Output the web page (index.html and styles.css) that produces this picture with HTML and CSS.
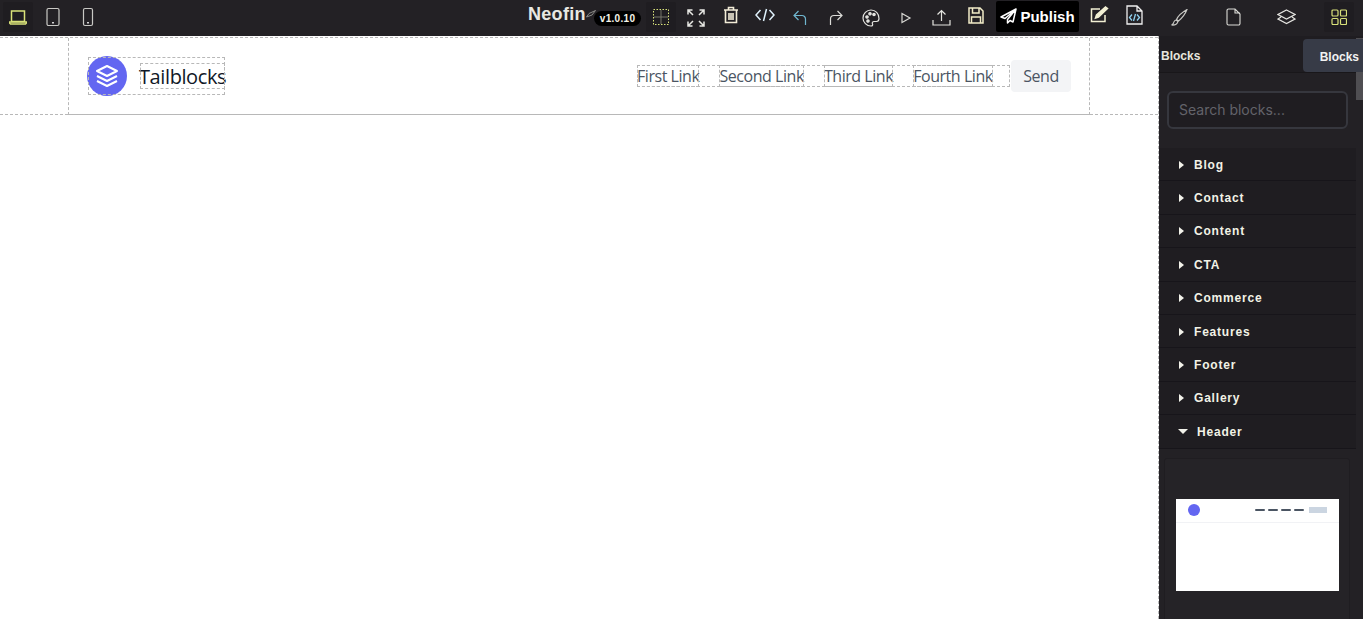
FILE: index.html
```html
<!DOCTYPE html>
<html lang="en">
<head>
	<meta charset="UTF-8">
	<title>Neofin</title>
	<link rel="stylesheet" href="styles.css">
</head>
<body>
	<div class="topbar">
		<div class="devices">
			<span class="tool tool-on"><svg width="18" height="15" viewBox="0 0 18 15" fill="none" stroke="#d9e27a" stroke-width="1.500"><path d="M2.500 1h13v10.500h-13z"/><path d="M0.500 12h17v1l-1 1H1.500l-1-1z"/></svg></span>
			<span class="tool"><svg width="16" height="20" viewBox="0 0 16 20" fill="none" stroke="#c9c9c5" stroke-width="1.200"><rect x="2" y="1.500" width="12" height="17" rx="1.500"/><path d="M8 15v1.600" stroke="#fff" stroke-width="1.600"/></svg></span>
			<span class="tool"><svg width="14" height="20" viewBox="0 0 14 20" fill="none" stroke="#c9c9c5" stroke-width="1.200"><rect x="2.500" y="1.500" width="9" height="17" rx="1.500"/><path d="M7 15v1.600" stroke="#fff" stroke-width="1.600"/></svg></span>
		</div>
		<div class="actions">
			<div class="brand"><span class="brand-name">Neofin</span><svg class="brand-mark" width="10" height="8" viewBox="0 0 10 8" fill="none" stroke="#8b8b88"><path d="M0.500 7 3 3.500 9.500 0.500 6 5z"/></svg><span class="version">v1.0.10</span></div>
			<span class="tool tool-on tool-grid"><svg width="16" height="16" viewBox="0 0 16 16" fill="none"><rect x="0.500" y="0.500" width="15" height="15" stroke="#d9e27a" stroke-dasharray="1.500 1.500"/><path d="M8 1v14M1 8h14" stroke="#77776a"/></svg></span>
			<span class="tool tool-a"><svg width="18" height="18" viewBox="0 0 18 18" fill="none" stroke="#e8e8e4" stroke-width="1.500"><path d="M1 5.500V1h4.500M1 1l5 5M17 5.500V1h-4.500M17 1l-5 5M1 12.500V17h4.500M1 17l5-5M17 12.500V17h-4.500M17 17l-5-5"/></svg></span>
			<span class="tool tool-b"><svg width="16" height="18" viewBox="0 0 16 18" fill="none" stroke="#f2ecd8" stroke-width="1.600"><path d="M1 4h14M5.500 4V1.500h5V4M2.500 4v12.500h11V4M6 7v7M8 7v7M10 7v7"/></svg></span>
			<span class="tool tool-c"><svg width="20" height="14" viewBox="0 0 20 14" fill="none" stroke="#dff1fb" stroke-width="1.500"><path d="M5.500 2 1 7l4.500 5M14.500 2 19 7l-4.500 5M11.500 1 8.500 13"/></svg></span>
			<span class="tool tool-d"><svg width="14" height="16" viewBox="0 0 14 16" fill="none" stroke="#6fb6cf" stroke-width="1.200"><path d="M5.500 1 1 5.500 5.500 10M1 5.500h8a3.500 3.500 0 0 1 3.500 3.500v6"/></svg></span>
			<span class="tool tool-e"><svg width="14" height="16" viewBox="0 0 14 16" fill="none" stroke="#dcdcd8" stroke-width="1.200"><path d="M8.500 1 13 5.500 8.500 10M13 5.500H5A3.500 3.500 0 0 0 1.500 9v6"/></svg></span>
			<span class="tool tool-f"><svg width="18" height="18" viewBox="0 0 18 18" fill="none" stroke="#e4e4e0" stroke-width="1.200"><path d="M9 1a8 8 0 1 0 0 16c1.500 0 2-1 1.500-2-.7-1.400.2-2.500 1.500-2.500h2.500c1.500 0 2.500-1.200 2.500-3C17 4.500 13.500 1 9 1z"/><circle cx="5" cy="8" r="1.200" fill="#e4e4e0"/><circle cx="8" cy="4.800" r="1.200" fill="#e4e4e0"/><circle cx="12" cy="5.500" r="1.200" fill="#e4e4e0"/><circle cx="6" cy="12" r="1.200" fill="#e4e4e0"/></svg></span>
			<span class="tool tool-g"><svg width="12" height="12" viewBox="0 0 12 12" fill="none" stroke="#d8d8d4" stroke-width="1.200"><path d="M2 1.500v9l8-4.500z"/></svg></span>
			<span class="tool tool-h"><svg width="19" height="18" viewBox="0 0 19 18" fill="none" stroke="#e4e4e0" stroke-width="1.200"><path d="M9.500 12V1.500M5.500 5.500l4-4 4 4M1 11v5h17v-5"/></svg></span>
			<span class="tool tool-i"><svg width="16" height="17" viewBox="0 0 16 17" fill="none" stroke="#f2ecc8" stroke-width="1.500"><path d="M1 1h11l3 3v12H1zM4.500 1v5h6.500V1M3.500 16v-6h9v6"/></svg></span>
			<button class="publish"><svg width="17" height="16" viewBox="0 0 17 16" fill="none" stroke="#fff" stroke-width="1.500" stroke-linejoin="round"><path d="M16 1 1 9l4 1.500L16 1 7.500 11.500V15l2.500-2.500 3 1.500z"/></svg>Publish</button>
			<span class="tool tool-j"><svg width="19" height="17" viewBox="0 0 19 17" fill="none" stroke="#f2f0d4" stroke-width="1.500"><path d="M15 9v6.500H1.500V3H10"/><path d="M17.500 2.500 8.500 11l-3 1 1-3L15.500 1z" fill="#f2f0d4"/></svg></span>
			<span class="tool tool-k"><svg width="17" height="20" viewBox="0 0 17 20" fill="none" stroke="#f0f0f0" stroke-width="1.300"><path d="M1 1h10l5 5v13H1zM11 1v5h5"/><path d="M6 9.500 3.500 12.500 6 15.500M11 9.500l2.500 3-2.500 3M9.500 9l-2 7" stroke="#8fd0ee"/></svg></span>
			<span class="tool tool-l"><svg width="18" height="17" viewBox="0 0 18 17" fill="none" stroke="#c9c9c5" stroke-width="1.100"><path d="M17 .500C13.500 2.500 8 7 6.500 10.500l2 1.500C11.500 9.500 15.500 4.500 17 .500zM6 11c-2 .5-2 1.500-2.500 3-.3.8-1.500 1.800-2 2 2.500.3 5.500-.5 6.500-3.500z"/></svg></span>
			<span class="tool tool-m"><svg width="15" height="18" viewBox="0 0 15 18" fill="none" stroke="#dcdcd8" stroke-width="1.100"><path d="M2.500 1h6.500l5 5v9.500a1.500 1.500 0 0 1-1.500 1.500h-10A1.500 1.500 0 0 1 1 15.500v-13A1.500 1.500 0 0 1 2.500 1zM9 1v4h5"/></svg></span>
			<span class="tool tool-n"><svg width="19" height="16" viewBox="0 0 19 16" fill="none" stroke="#e4e4e0" stroke-width="1.200"><path d="M9.500 1 18 5.500 9.500 10 1 5.500zM4 8 1 10l8.500 4.500L18 10l-3-2"/></svg></span>
			<span class="tool tool-on tool-o"><svg width="16" height="16" viewBox="0 0 16 16" fill="none" stroke="#d9e27a" stroke-width="1.200"><rect x="1" y="1" width="6" height="6" rx="1"/><rect x="9.500" y="1" width="6" height="6" rx="1"/><rect x="1" y="9.500" width="6" height="6" rx="1"/><rect x="9.500" y="9.500" width="6" height="6" rx="1"/></svg></span>
		</div>
	</div>
	<div class="main">
		<div class="canvas">
			<header class="site-header">
				<div class="site-inner">
					<a class="logo">
						<span class="logo-mark"><svg width="24" height="24" viewBox="0 0 24 24" fill="none" stroke="#fff" stroke-width="2" stroke-linejoin="round"><path d="M12 2 2 7l10 5 10-5zM2 17l10 5 10-5M2 12l10 5 10-5"/></svg></span>
						<span class="logo-text">Tailblocks</span>
					</a>
					<nav class="site-nav">
						<a>First Link</a>
						<a>Second Link</a>
						<a>Third Link</a>
						<a>Fourth Link</a>
					</nav>
					<button class="send">Send</button>
				</div>
			</header>
		</div>
		<aside class="panel">
			<div class="panel-tabs">
				<span class="panel-title">Blocks</span>
				<span class="panel-tip">Blocks</span>
			</div>
			<div class="search-row">
				<input class="search" placeholder="Search blocks...">
			</div>
			<ul class="cats">
				<li><i class="arrow"></i>Blog</li>
				<li><i class="arrow"></i>Contact</li>
				<li><i class="arrow"></i>Content</li>
				<li><i class="arrow"></i>CTA</li>
				<li><i class="arrow"></i>Commerce</li>
				<li><i class="arrow"></i>Features</li>
				<li><i class="arrow"></i>Footer</li>
				<li><i class="arrow"></i>Gallery</li>
				<li class="open"><i class="arrow"></i>Header</li>
			</ul>
			<div class="block-card">
				<div class="thumb">
					<div class="thumb-bar">
						<span class="thumb-dot"></span>
						<span class="thumb-line"></span>
						<span class="thumb-line"></span>
						<span class="thumb-line"></span>
						<span class="thumb-line"></span>
						<span class="thumb-btn"></span>
					</div>
				</div>
			</div>
			<div class="scroll-thumb"></div>
		</aside>
	</div>
</body>
</html>
```

FILE: styles.css
```css
*{
	margin: 0;
	padding: 0;
	box-sizing: border-box;
}
li{
	list-style: none;
}
html,body{
	height: 100%;
	overflow: hidden;
}
body{
	font-family: "Liberation Sans", sans-serif;
	background: #fff;
	display: flex;
	flex-direction: column;
}
.topbar{
	height: 36px;
	flex: none;
	background: #232125;
	display: flex;
	justify-content: space-between;
	align-items: center;
}
.devices{
	display: flex;
	align-items: center;
	padding-left: 3px;
}
.devices .tool{
	width: 30px;
	margin: 0 5px 2px 0;
}
.tool{
	height: 30px;
	display: flex;
	align-items: center;
	justify-content: center;
	flex: none;
	border-radius: 2px;
}
.tool-on{
	background: #1f1d21;
}
.actions{
	display: flex;
	align-items: center;
}
.brand{
	display: flex;
	align-items: center;
	width: 118px;
	margin-bottom: 7px;
}
.brand-name{
	font-size: 18px;
	font-weight: 700;
	letter-spacing: .3px;
	color: #e8e8e2;
}
.brand-mark{
	margin: -2px 0 0 0;
}
.version{
	background: #000;
	color: #f4f4e8;
	font-size: 10px;
	font-weight: 700;
	letter-spacing: .3px;
	padding: 2px 6px;
	border-radius: 8px;
	margin: 7px 0 0 -2px;
}
.tool-grid{ width: 30px; margin: 0 5px 2px 0; }
.tool-a{ width: 30px; margin-right: 5px; }
.tool-b{ width: 30px; margin-bottom: 6px; }
.tool-c{ width: 38px; margin-bottom: 6px; }
.tool-d{ width: 32px; }
.tool-e{ width: 40px; }
.tool-f{ width: 30px; }
.tool-g{ width: 40px; }
.tool-h{ width: 30px; }
.tool-i{ width: 40px; margin-bottom: 6px; }
.publish{
	width: 83px;
	height: 31px;
	flex: none;
	margin-bottom: 4px;
	background: #000;
	color: #fff;
	border: 0;
	border-radius: 2px;
	font-family: "Liberation Sans", sans-serif;
	font-size: 15px;
	font-weight: 700;
	display: flex;
	align-items: center;
	justify-content: center;
	gap: 3px;
}
.tool-j{ width: 40px; margin-bottom: 8px; }
.tool-k{ width: 30px; margin-bottom: 7px; }
.tool-l{ width: 60px; margin-bottom: 2px; }
.tool-m{ width: 48px; margin-bottom: 2px; }
.tool-n{ width: 58px; margin-bottom: 2px; }
.tool-o{ width: 30px; margin: 0 9px 2px 9px; }
.main{
	flex: 1;
	display: flex;
	min-height: 0;
}
.canvas{
	flex: 1;
	min-width: 0;
	background: #fff;
	border-right: 1px dashed #b8b8b8;
	padding-top: 1px;
}
.site-header{
	height: 78px;
	border-top: 1px dashed #b8b8b8;
	border-bottom: 1px dashed #b8b8b8;
	padding-left: 68px;
}
.site-inner{
	width: 1022px;
	height: 77px;
	border-left: 1px dashed #b8b8b8;
	border-right: 1px dashed #b8b8b8;
	border-bottom: 1px dashed #b8b8b8;
	padding: 0 18px;
	display: flex;
	align-items: center;
	font-family: "Open Sans", "Noto Sans", sans-serif;
}
.logo{
	display: flex;
	align-items: center;
	gap: 13px;
	outline: 1px dashed #b8b8b8;
	outline-offset: -1px;
	height: 38px;
	width: 137px;
	margin-left: 1px;
}
.logo-mark{
	width: 40px;
	height: 40px;
	margin-left: -1px;
	border-radius: 50%;
	background: #6366f1;
	display: flex;
	align-items: center;
	justify-content: center;
	flex: none;
}
.logo-text{
	font-size: 20px;
	font-weight: 500;
	letter-spacing: -.4px;
	text-indent: -1px;
	color: #111827;
	height: 26px;
	line-height: 28px;
	outline: 1px dashed #b8b8b8;
	outline-offset: -1px;
	width: 85px;
	white-space: nowrap;
}
.site-nav{
	margin-left: auto;
	display: flex;
	outline: 1px dashed #b8b8b8;
	outline-offset: -1px;
	height: 22px;
	width: 373px;
	font-size: 16px;
	letter-spacing: -.45px;
	color: #4b5563;
	line-height: 22px;
}
.site-nav a{
	margin-right: 20px;
	outline: 1px dashed #b8b8b8;
	outline-offset: -1px;
	white-space: nowrap;
}
.send{
	width: 60px;
	height: 32px;
	margin-left: 1px;
	background: #f3f4f6;
	border: 0;
	border-radius: 4px;
	color: #4b5563;
	font-family: "Open Sans", "Noto Sans", sans-serif;
	font-size: 16px;
	letter-spacing: -.5px;
}
.panel{
	width: 204px;
	flex: none;
	background: #232125;
	position: relative;
	overflow: hidden;
	color: #f2f2ea;
}
.panel-tabs{
	height: 37px;
	background: #1f1d21;
	border-bottom: 1px solid #19171a;
	display: flex;
	justify-content: space-between;
	align-items: center;
	font-size: 12px;
	font-weight: 700;
	color: #e6e6de;
}
.panel-title{
	padding: 3px 0 0 2px;
}
.panel-tip{
	width: 60px;
	height: 33px;
	margin-top: 3px;
	background: #373b47;
	border-radius: 4px 0 0 4px;
	color: #f2f2f2;
	display: flex;
	align-items: center;
	justify-content: flex-end;
	padding: 2px 4px 0 0;
	position: relative;
	z-index: 1;
}
.search-row{
	height: 75px;
	padding: 18px 15px 0 8px;
}
.search{
	width: 181px;
	height: 38px;
	background: #1f1d21;
	border: 2px solid #36373e;
	border-radius: 6px;
	padding: 0 0 2px 10px;
	font-family: "Inter", sans-serif;
	font-size: 14px;
	color: #eee;
}
.search::placeholder{
	color: #63636a;
}
.cats{
	background: #1f1d21;
	margin-right: 7px;
}
.cats li{
	height: 33.4px;
	border-bottom: 1px solid #17151a;
	display: flex;
	align-items: center;
	padding: 1px 0 0 20px;
	font-size: 12px;
	font-weight: 700;
	letter-spacing: .8px;
	color: #f2f2e6;
}
.arrow{
	width: 0;
	height: 0;
	border-top: 4px solid transparent;
	border-bottom: 4px solid transparent;
	border-left: 5px solid #f2f2ea;
	margin-right: 10px;
}
.cats .open .arrow{
	border-left: 5px solid transparent;
	border-right: 5px solid transparent;
	border-top: 5px solid #f2f2ea;
	border-bottom: 0;
	margin: 0 9px 0 -1px;
}
.block-card{
	width: 186px;
	height: 180px;
	margin: 9px 0 0 5px;
	background: #252327;
	border: 1px solid #1f1d21;
	border-radius: 3px;
	padding: 40px 11px 0;
}
.thumb{
	width: 163px;
	height: 92px;
	background: #fff;
}
.thumb-bar{
	height: 24px;
	border-bottom: 1px solid #f1f2f5;
	display: flex;
	align-items: center;
	padding: 0 12px;
	gap: 3px;
}
.thumb-dot{
	width: 12px;
	height: 12px;
	border-radius: 50%;
	background: #6366f1;
	margin-right: auto;
}
.thumb-line{
	width: 10px;
	height: 2.500px;
	background: #4b5563;
	border-radius: 1px;
}
.thumb-btn{
	width: 18px;
	height: 6px;
	background: #cbd5e1;
	margin-left: 2px;
}
.scroll-thumb{
	position: absolute;
	top: 2px;
	right: 0;
	width: 7px;
	height: 62px;
	background: #4f4e52;
}
```
